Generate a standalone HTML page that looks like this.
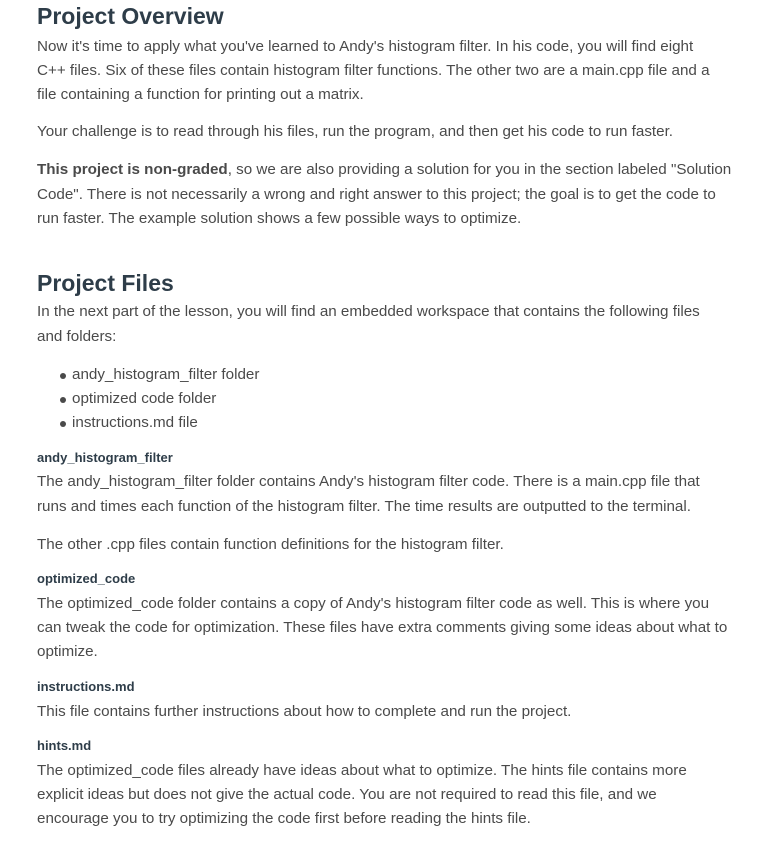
<!DOCTYPE html>
<html><head><meta charset="utf-8"><style>
body{margin:0;width:781px;height:865px;background:#fff;position:relative;overflow:hidden;font-family:"Liberation Sans",Arial,sans-serif;}
div{position:absolute;left:37px;white-space:nowrap;}
.t{font-size:15.2px;color:#4a4a4a;line-height:20px;}
.h{font-size:23px;font-weight:bold;color:#2e3d49;line-height:30px;}
.s{font-size:13px;font-weight:bold;color:#2e3d49;line-height:20px;}
.b{left:72px}
.dot{left:60px;width:6px;height:6px;border-radius:50%;background:#4a4a4a;}
</style></head><body>
<div class="h" style="top:1px">Project Overview</div>
<div class="t" style="top:37px">Now it's time to apply what you've learned to Andy's histogram filter. In his code, you will find eight</div>
<div class="t" style="top:61px">C++ files. Six of these files contain histogram filter functions. The other two are a main.cpp file and a</div>
<div class="t" style="top:85px">file containing a function for printing out a matrix.</div>
<div class="t" style="top:122px">Your challenge is to read through his files, run the program, and then get his code to run faster.</div>
<div class="t" style="top:160px"><b>This project is non-graded</b>, so we are also providing a solution for you in the section labeled "Solution</div>
<div class="t" style="top:185px">Code". There is not necessarily a wrong and right answer to this project; the goal is to get the code to</div>
<div class="t" style="top:209px">run faster. The example solution shows a few possible ways to optimize.</div>
<div class="h" style="top:268px">Project Files</div>
<div class="t" style="top:302px">In the next part of the lesson, you will find an embedded workspace that contains the following files</div>
<div class="t" style="top:327px">and folders:</div>
<div class="dot" style="top:373px"></div><div class="t b" style="top:365px">andy_histogram_filter folder</div>
<div class="dot" style="top:397px"></div><div class="t b" style="top:389px">optimized code folder</div>
<div class="dot" style="top:421px"></div><div class="t b" style="top:413px">instructions.md file</div>
<div class="s" style="top:448px">andy_histogram_filter</div>
<div class="t" style="top:472px">The andy_histogram_filter folder contains Andy's histogram filter code. There is a main.cpp file that</div>
<div class="t" style="top:497px">runs and times each function of the histogram filter. The time results are outputted to the terminal.</div>
<div class="t" style="top:535px">The other .cpp files contain function definitions for the histogram filter.</div>
<div class="s" style="top:569px">optimized_code</div>
<div class="t" style="top:594px">The optimized_code folder contains a copy of Andy's histogram filter code as well. This is where you</div>
<div class="t" style="top:618px">can tweak the code for optimization. These files have extra comments giving some ideas about what to</div>
<div class="t" style="top:642px">optimize.</div>
<div class="s" style="top:677px">instructions.md</div>
<div class="t" style="top:702px">This file contains further instructions about how to complete and run the project.</div>
<div class="s" style="top:736px">hints.md</div>
<div class="t" style="top:761px">The optimized_code files already have ideas about what to optimize. The hints file contains more</div>
<div class="t" style="top:785px">explicit ideas but does not give the actual code. You are not required to read this file, and we</div>
<div class="t" style="top:809px">encourage you to try optimizing the code first before reading the hints file.</div>
</body></html>
